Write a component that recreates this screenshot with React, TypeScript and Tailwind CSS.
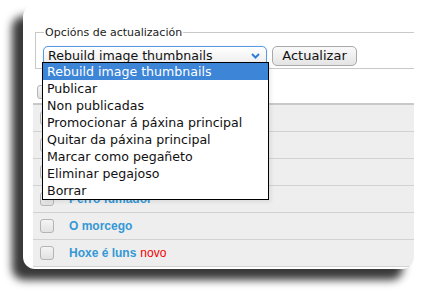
import React from 'react';

const options = [
    'Rebuild image thumbnails',
    'Publicar',
    'Non publicadas',
    'Promocionar á páxina principal',
    'Quitar da páxina principal',
    'Marcar como pegañeto',
    'Eliminar pegajoso',
    'Borrar',
];

// first rows sit under the open dropdown, so their titles never show
const rows = [
    { id: 1, title: '', isNew: false },
    { id: 2, title: '', isNew: false },
    { id: 3, title: '', isNew: false },
    { id: 4, title: 'Perro fumador', isNew: false },
    { id: 5, title: 'O morcego', isNew: false },
    { id: 6, title: 'Hoxe é luns', isNew: true },
];

function Checkbox() {
    return (
        <span className="block w-[14px] h-[14px] rounded-[3px] border border-[#b4b4b4] bg-gradient-to-b from-[#f4f4f4] to-[#e2e2e2]" />
    );
}

export default function App() {
    return (
        <div className="relative w-[422px] h-[293px] bg-white overflow-hidden font-['DejaVu_Sans',sans-serif]">
            <div className="ml-[23px] mt-[5px] w-[391px] h-[264px] rounded-[12px] bg-white overflow-hidden shadow-[-11px_11px_9px_rgba(0,0,0,0.78)]">
                {/* fieldset */}
                <div className="pl-[12px] pt-[22px]">
                    <fieldset className="h-[42px] border-l border-t border-b border-[#c9c9c9] pl-[7px] pr-0 pt-0 pb-0 m-0 min-w-0">
                        <legend className="ml-[1px] px-[1px] text-[11px] leading-[11px] text-[#222]">
                            Opcións de actualización
                        </legend>
                        <div className="flex gap-[5px] mt-[8px]">
                            <div className="flex items-center w-[224px] h-[20px] rounded-[5px] border border-[#5a9be0] bg-gradient-to-b from-white to-[#ececec] pl-[4px] pr-[6px] text-[12.6px] text-[#111] shadow-[0_0_1px_#8fbdf0]">
                                <span className="flex-1">Rebuild image thumbnails</span>
                                <svg width="9" height="6" viewBox="0 0 9 6">
                                    <path d="M1 1 L4.5 4.5 L8 1" fill="none" stroke="#2f7fd8" strokeWidth="2" />
                                </svg>
                            </div>
                            <div className="flex items-center justify-center w-[85px] h-[20px] rounded-[5px] border border-[#a9a9a9] bg-gradient-to-b from-[#fafafa] to-[#e4e4e4] text-[13px] text-[#111]">
                                Actualizar
                            </div>
                        </div>
                    </fieldset>
                </div>

                {/* toolbar */}
                <div className="pl-[14px] pt-[16px] h-[34px]">
                    <Checkbox />
                </div>

                {/* table */}
                <div className="ml-[10px] border-t-[2px] border-[#c8c8c8] bg-[#eeeeee]">
                    {rows.map((row) => (
                        <div
                            key={row.id}
                            className="flex items-center h-[27px] border-b border-[#d2d2d2] pl-[7px] font-['Liberation_Sans',Arial,sans-serif] text-[12px]"
                        >
                            <Checkbox />
                            <span className="ml-[15px] font-bold text-[#3498d6]">{row.title}</span>
                            {row.isNew && <span className="ml-[4px] text-[#f40000]">novo</span>}
                        </div>
                    ))}
                </div>
            </div>

            {/* open dropdown */}
            <div className="absolute left-[42px] top-[62px] w-[227px] border border-black bg-white shadow-[2px_2px_4px_rgba(0,0,0,0.08)]">
                {options.map((opt, i) => (
                    <div
                        key={opt}
                        className={
                            i === 0
                                ? 'h-[17px] pl-[4px] text-[12.6px] leading-[17px] bg-[#3c85d7] text-white'
                                : 'h-[17px] pl-[4px] text-[12.6px] leading-[17px] text-[#111]'
                        }
                    >
                        {opt}
                    </div>
                ))}
            </div>
        </div>
    );
}
